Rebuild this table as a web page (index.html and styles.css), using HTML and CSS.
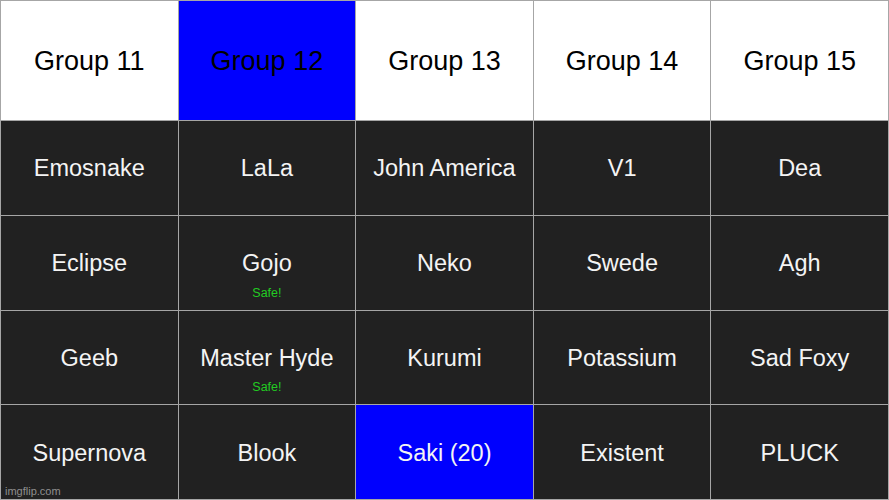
FILE: index.html
```html
<!DOCTYPE html>
<html>
<head>
<meta charset="utf-8">
<link rel="stylesheet" href="styles.css">
</head>
<body>
<div class="board">
  <div class="cell head">Group 11</div>
  <div class="cell head blue">Group 12</div>
  <div class="cell head">Group 13</div>
  <div class="cell head">Group 14</div>
  <div class="cell head">Group 15</div>

  <div class="cell">Emosnake</div>
  <div class="cell">LaLa</div>
  <div class="cell">John America</div>
  <div class="cell">V1</div>
  <div class="cell">Dea</div>

  <div class="cell">Eclipse</div>
  <div class="cell">Gojo<span class="safe">Safe!</span></div>
  <div class="cell">Neko</div>
  <div class="cell">Swede</div>
  <div class="cell">Agh</div>

  <div class="cell">Geeb</div>
  <div class="cell">Master Hyde<span class="safe">Safe!</span></div>
  <div class="cell">Kurumi</div>
  <div class="cell">Potassium</div>
  <div class="cell">Sad Foxy</div>

  <div class="cell wm-host">Supernova<span class="watermark">imgflip.com</span></div>
  <div class="cell">Blook</div>
  <div class="cell blue">Saki (20)</div>
  <div class="cell">Existent</div>
  <div class="cell">PLUCK</div>
</div>
</body>
</html>
```

FILE: styles.css
```css
* { box-sizing: border-box; }
html, body { margin: 0; padding: 0; }
body {
  width: 889px;
  height: 500px;
  overflow: hidden;
  font-family: "Liberation Sans", Arial, sans-serif;
  background: #222;
}
.board {
  width: 889px;
  height: 500px;
  display: grid;
  grid-template-columns: repeat(5, 1fr);
  grid-template-rows: 119px repeat(4, 1fr);
  gap: 1px;
  padding: 1px;
  background: #a6a6a6;
}
.cell {
  position: relative;
  display: flex;
  align-items: center;
  justify-content: center;
  background: #212121;
  color: #f4f4f4;
  font-size: 23.5px;
  padding-top: 2px;
}
.cell.head {
  background: #fff;
  color: #000;
  font-size: 27px;
  padding-top: 1px;
}
.cell.blue {
  background: #0000fe;
}
.cell.head.blue { color: #000; }
.safe {
  position: absolute;
  left: 0;
  right: 0;
  bottom: 10px;
  text-align: center;
  font-size: 12.5px;
  color: #22cc22;
}
.watermark {
  position: absolute;
  left: 4px;
  bottom: 2px;
  font-size: 11px;
  color: #8f8f8f;
}
```
